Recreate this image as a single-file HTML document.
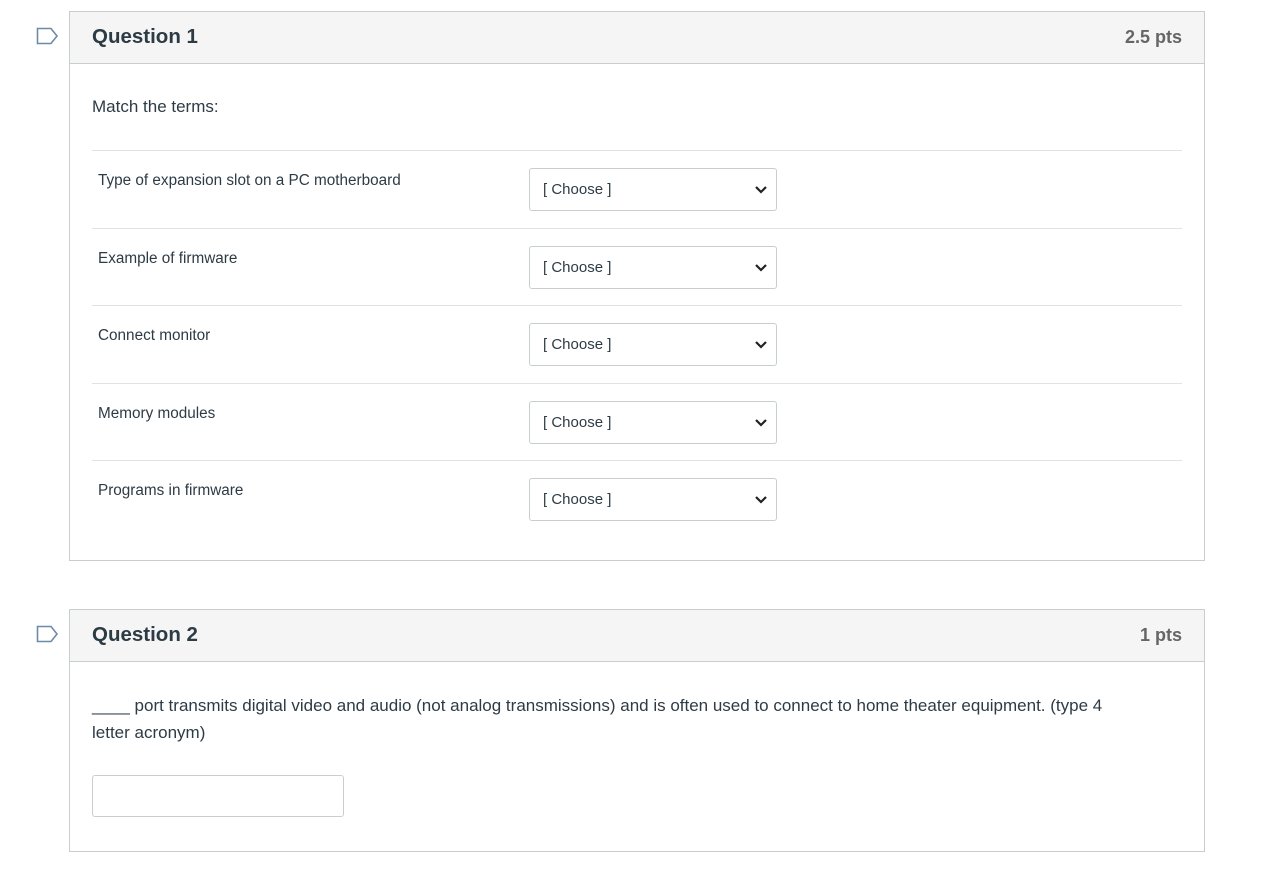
<!DOCTYPE html>
<html><head><style>
*{box-sizing:border-box;margin:0;padding:0}
body{width:1285px;height:886px;background:#fff;font-family:"Liberation Sans",sans-serif;color:#2d3b45;position:relative;overflow:hidden}
.box{position:absolute;left:69px;width:1136px;border:1px solid #c7cdd1}
.hdr{height:52px;background:#f5f5f5;border-bottom:1px solid #c7cdd1;position:relative}
.hdr .t{position:absolute;left:22px;top:13px;font-size:20.5px;font-weight:bold;color:#2d3b45}
.hdr .p{position:absolute;right:22px;top:15px;font-size:18px;font-weight:bold;color:#666}
.flag{position:absolute;left:36px}
.abs{position:absolute}
.line{position:absolute;left:92px;width:1090px;height:1px;background:#e0e3e5}
.lbl{position:absolute;left:98px;font-size:15.3px;color:#2d3b45}
.sel{position:absolute;left:529px;width:248px;height:43px;border:1px solid #c7cdd1;border-radius:3px;font-size:15px;padding:12px 13px;color:#2d3b45}
.sel svg{position:absolute;right:8px;top:16px}
</style></head><body>
<svg class="flag" style="top:27px" width="23" height="18"><path d="M1.5 1.5H15L21 9L15 16.5H1.5Z" fill="none" stroke="#6f8aa8" stroke-width="1.6"/></svg>
<svg class="flag" style="top:625px" width="23" height="18"><path d="M1.5 1.5H15L21 9L15 16.5H1.5Z" fill="none" stroke="#6f8aa8" stroke-width="1.6"/></svg>

<div class="box" style="top:11px;height:550px"><div class="hdr"><div class="t">Question 1</div><div class="p">2.5 pts</div></div></div>
<div class="abs" style="left:92px;top:97px;font-size:17px">Match the terms:</div>

<div class="line" style="top:150px"></div>
<div class="lbl" style="top:172px">Type of expansion slot on a PC motherboard</div>
<div class="sel" style="top:168px">[ Choose ]<svg width="14" height="10"><path d="M2 2L7 7L12 2" fill="none" stroke="#222" stroke-width="2.2"/></svg></div>
<div class="line" style="top:228px"></div>
<div class="lbl" style="top:250px">Example of firmware</div>
<div class="sel" style="top:246px">[ Choose ]<svg width="14" height="10"><path d="M2 2L7 7L12 2" fill="none" stroke="#222" stroke-width="2.2"/></svg></div>
<div class="line" style="top:305px"></div>
<div class="lbl" style="top:327px">Connect monitor</div>
<div class="sel" style="top:323px">[ Choose ]<svg width="14" height="10"><path d="M2 2L7 7L12 2" fill="none" stroke="#222" stroke-width="2.2"/></svg></div>
<div class="line" style="top:383px"></div>
<div class="lbl" style="top:405px">Memory modules</div>
<div class="sel" style="top:401px">[ Choose ]<svg width="14" height="10"><path d="M2 2L7 7L12 2" fill="none" stroke="#222" stroke-width="2.2"/></svg></div>
<div class="line" style="top:460px"></div>
<div class="lbl" style="top:482px">Programs in firmware</div>
<div class="sel" style="top:478px">[ Choose ]<svg width="14" height="10"><path d="M2 2L7 7L12 2" fill="none" stroke="#222" stroke-width="2.2"/></svg></div>

<div class="box" style="top:609px;height:243px"><div class="hdr"><div class="t">Question 2</div><div class="p">1 pts</div></div></div>
<div class="abs" style="left:92px;top:692px;width:1040px;font-size:17px;line-height:27px">____ port transmits digital video and audio (not analog transmissions) and is often used to connect to home theater equipment. (type 4 letter acronym)</div>
<div class="abs" style="left:92px;top:775px;width:252px;height:42px;border:1px solid #c7cdd1;border-radius:3px"></div>
</body></html>
